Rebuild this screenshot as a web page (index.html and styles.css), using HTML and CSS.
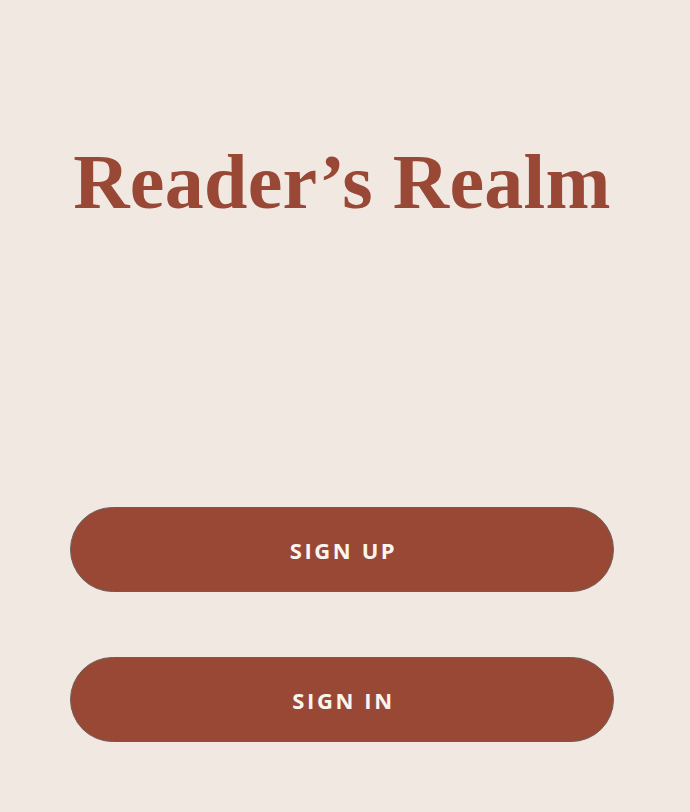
FILE: index.html
```html
<!DOCTYPE html>
<html>
<head>
<meta charset="utf-8">
<link rel="stylesheet" href="styles.css">
</head>
<body>
<main class="screen">
  <h1 class="title">Reader’s Realm</h1>
  <div class="actions">
    <button class="btn">SIGN UP</button>
    <button class="btn">SIGN IN</button>
  </div>
</main>
</body>
</html>
```

FILE: styles.css
```css
html, body {
  margin: 0;
  padding: 0;
  background: #f0e8e1;
}
.screen {
  width: 690px;
  height: 812px;
  box-sizing: border-box;
  padding: 0 76px 0 70px;
  display: flex;
  flex-direction: column;
}
.title {
  margin: 136px 0 0 0;
  font-family: "Liberation Serif", serif;
  font-weight: 700;
  font-size: 78px;
  line-height: 92px;
  color: #9a4836;
  text-align: center;
  letter-spacing: 0.3px;
}
.actions {
  margin-top: 279px;
  display: flex;
  flex-direction: column;
  gap: 65px;
}
.btn {
  height: 85px;
  width: 544px;
  padding: 0 0 0 3px;
  border-radius: 43px;
  border: 1px solid #6b5e58;
  background: #9a4836;
  color: #fbf5f0;
  font-family: "Open Sans", sans-serif;
  font-weight: 700;
  font-size: 22px;
  letter-spacing: 2.6px;
  cursor: pointer;
}
```
